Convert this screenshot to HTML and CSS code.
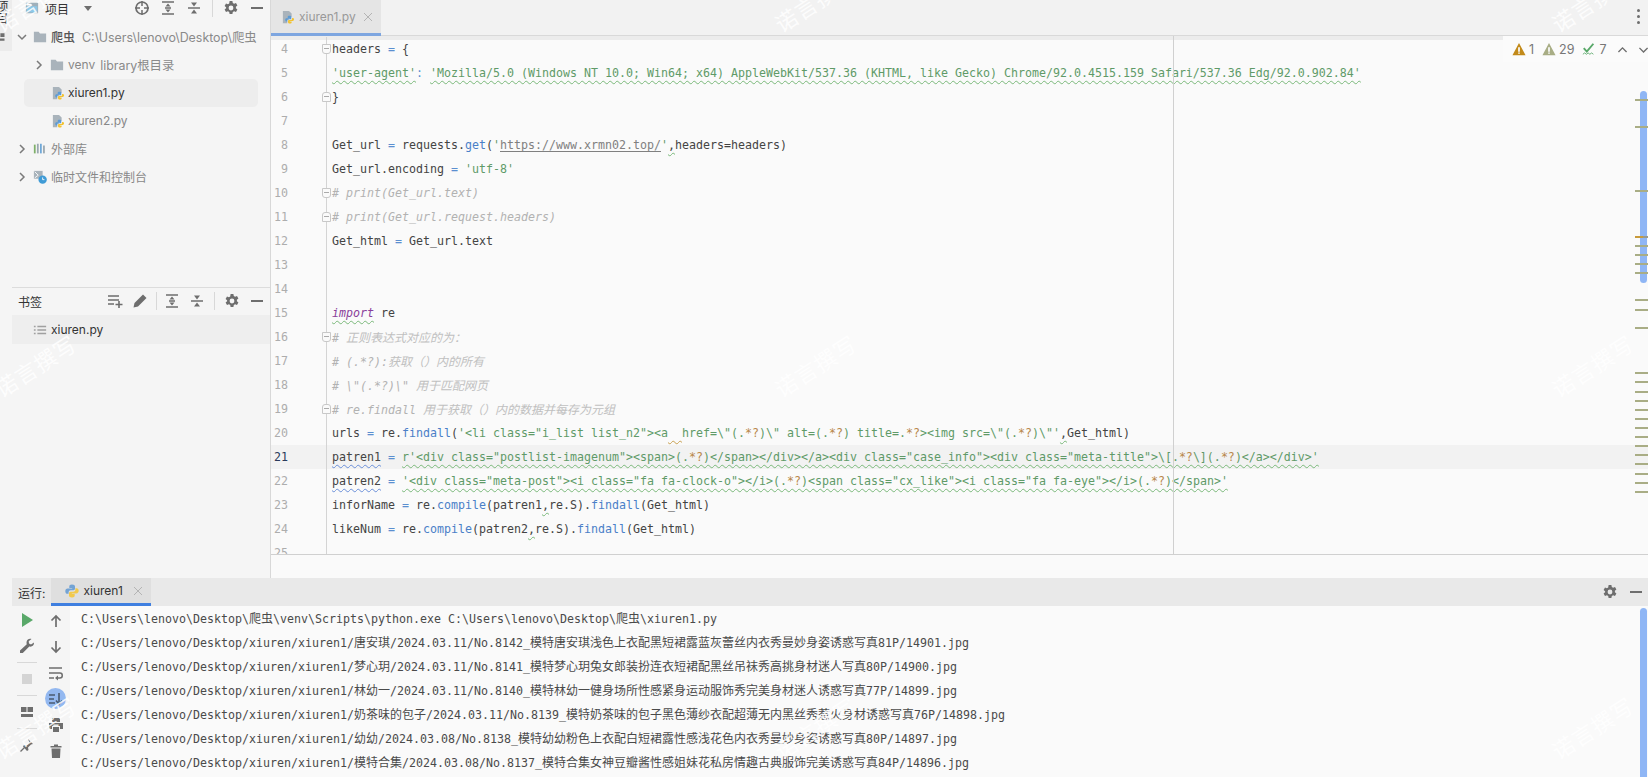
FILE: index.html
```html
<!DOCTYPE html>
<html lang="zh">
<head>
<meta charset="utf-8">
<title>xiuren1.py</title>
<link rel="stylesheet" href="styles.css">
</head>
<body>
<svg class="defs" width="0" height="0">
  <symbol id="i-gear" viewBox="0 0 16 16"><path fill="#6e6e6e" fill-rule="evenodd" d="M6.6 1h2.8l.4 2 1.3.7 1.9-.7 1.4 2.4-1.5 1.3v1.6l1.5 1.3-1.4 2.4-1.9-.7-1.3.7-.4 2H6.6l-.4-2-1.3-.7-1.9.7-1.4-2.4 1.5-1.3V7.2L1.600 5.900 3 3.500l1.900.7 1.300-.7zM8 5.600a2.400 2.400 0 1 0 0 4.800 2.400 2.400 0 0 0 0-4.800z"/></symbol>
  <symbol id="i-minus" viewBox="0 0 16 16"><rect x="2" y="7" width="12" height="2" fill="#6e6e6e"/></symbol>
  <symbol id="i-target" viewBox="0 0 16 16"><circle cx="8" cy="8" r="6" fill="none" stroke="#6e6e6e" stroke-width="1.700"/><path d="M8 1v5M8 10v5M1 8h5M10 8h5" stroke="#6e6e6e" stroke-width="1.500"/></symbol>
  <symbol id="i-expand" viewBox="0 0 16 16"><path d="M2 2h12M2 14h12M5 8h6" stroke="#6e6e6e" stroke-width="1.400"/><path d="M8 3.500 10.500 6.500h-5zM8 12.500 10.500 9.500h-5z" fill="#6e6e6e"/></symbol>
  <symbol id="i-collapse" viewBox="0 0 16 16"><path d="M2 8h12" stroke="#6e6e6e" stroke-width="1.500"/><path d="M8 6.500 5 2.500h6zM8 9.500 5 13.500h6z" fill="#6e6e6e"/></symbol>
  <symbol id="i-folder" viewBox="0 0 16 14"><path fill="#a9b3bb" d="M1 1h5.500l1.500 2h7v10H1z"/></symbol>
  <symbol id="i-chev-r" viewBox="0 0 10 10"><path d="M3 1l4 4-4 4" fill="none" stroke="#7a7a7a" stroke-width="1.500"/></symbol>
  <symbol id="i-chev-d" viewBox="0 0 10 10"><path d="M1 3l4 4 4-4" fill="none" stroke="#7a7a7a" stroke-width="1.500"/></symbol>
  <symbol id="i-py" viewBox="0 0 16 16">
    <path fill="#4f8fd0" d="M8 1.500C5.500 1.500 5.300 2.600 5.300 3.500V5h2.900v.6H3.600C2.200 5.600 1.300 6.700 1.300 8.200c0 1.600.9 2.600 2.200 2.600h1.100V9.200c0-1.200 1-2 2.100-2h2.700c1 0 1.600-.8 1.600-1.700v-2C11 2.300 9.900 1.500 8 1.500z" opacity=".75"/>
    <path fill="#f2c94a" d="M8 14.500c2.500 0 2.700-1.100 2.700-2V11H7.800v-.6h4.600c1.400 0 2.300-1.100 2.300-2.600 0-1.600-.9-2.600-2.200-2.600h-1.100v1.600c0 1.200-1 2-2.100 2H6.600C5.600 8.800 5 9.600 5 10.500v2c0 1.200 1.100 2 3 2z"/>
  </symbol>
  <symbol id="i-pyfile" viewBox="0 0 16 16">
    <path fill="#a9b3bb" d="M1 1h7l3 3v4H8v3H6v4H1z"/>
    <path fill="#5b9bd5" d="M8.500 6.500C6.800 6.500 6.500 7.300 6.500 8v1h2.200v.5H5.200C4.200 9.500 3.700 10.300 3.700 11.300s.6 1.700 1.500 1.700H6v-1c0-.9.7-1.400 1.500-1.400h2c.7 0 1.100-.6 1.100-1.200V8c0-.9-.7-1.500-2.100-1.500z"/>
    <path fill="#f2c230" d="M9 15.500c1.700 0 2-.8 2-1.500v-1H8.800v-.5h3.500c1 0 1.500-.8 1.500-1.800s-.6-1.700-1.500-1.700h-.8v1c0 .9-.7 1.400-1.500 1.400H8c-.7 0-1.100.6-1.100 1.200V14c0 .9.700 1.500 2.100 1.500z"/>
  </symbol>
  <symbol id="i-project" viewBox="0 0 16 16"><path fill="#9fb0bb" d="M1 2h14v12H1z"/><path fill="#fff" d="M2 3h5l1 2H2z"/><path fill="#8cc8e8" d="M2 6h12v7H2z"/></symbol>
  <symbol id="i-libs" viewBox="0 0 16 16"><rect x="1" y="3" width="2" height="10" fill="#7fb069"/><rect x="4.500" y="2" width="2" height="11" fill="#9aa7b0"/><rect x="8" y="2" width="2" height="11" fill="#6fa8d8"/><rect x="11.500" y="4" width="2" height="9" fill="#9aa7b0"/></symbol>
  <symbol id="i-scratch" viewBox="0 0 16 16"><path fill="#a9b3bb" d="M1 1h10v9H1z"/><path d="M2 2l4 4-4 3" stroke="#fff" fill="none"/><circle cx="11" cy="11" r="4.800" fill="#3f9bd6"/><path d="M11 8.500V11h2" stroke="#fff" fill="none"/></symbol>
  <symbol id="i-list" viewBox="0 0 16 16"><path d="M5 4h10M5 8h10M5 12h10" stroke="#a0a0a0" stroke-width="1.500"/><path d="M1 4h2M1 8h2M1 12h2" stroke="#a0a0a0" stroke-width="1.500"/></symbol>
  <symbol id="i-addlist" viewBox="0 0 16 16"><path d="M1 3h11M1 7h11M1 11h6" stroke="#6e6e6e" stroke-width="1.600"/><path d="M12 8v7M8.500 11.500h7" stroke="#6e6e6e" stroke-width="1.600"/></symbol>
  <symbol id="i-pencil" viewBox="0 0 16 16"><path fill="#6e6e6e" d="M11 1.500l3.500 3.500-8.500 8.500-4.500 1 1-4.500z"/></symbol>
  <symbol id="i-play" viewBox="0 0 16 16"><path fill="#59a869" d="M3 1l11 7-11 7z"/></symbol>
  <symbol id="i-wrench" viewBox="0 0 16 16"><path fill="#6e6e6e" d="M15 4.500 12 6.500l-2-1-.3-2.300L12.500 1C10 .2 7.500 1.800 7.500 4.500c0 .7.100 1.200.3 1.700L1 12.500V15h2.800l6.500-6.500c2.500.7 5-1 4.700-4z"/></symbol>
  <symbol id="i-stop" viewBox="0 0 16 16"><rect x="3" y="3" width="10" height="10" fill="#d4d4d4"/></symbol>
  <symbol id="i-layout" viewBox="0 0 16 16"><path fill="#6e6e6e" d="M2 3h5.500v5H2zM8.500 3H14v5H8.500zM2 10h12v3H2z"/></symbol>
  <symbol id="i-pin" viewBox="0 0 16 16"><path fill="#6e6e6e" d="M9 2l5 5-2 .5-3 3 .5 2.500-1.500 1L4 9.500l1-1.500 2.500.5 3-3z"/><path d="M5.500 10.500 1.500 14.500" stroke="#6e6e6e" stroke-width="1.200"/></symbol>
  <symbol id="i-up" viewBox="0 0 16 16"><path d="M8 14V3M3.500 7.500 8 3l4.500 4.500" fill="none" stroke="#6e6e6e" stroke-width="1.700"/></symbol>
  <symbol id="i-down" viewBox="0 0 16 16"><path d="M8 2v11M3.500 8.500 8 13l4.500-4.500" fill="none" stroke="#6e6e6e" stroke-width="1.700"/></symbol>
  <symbol id="i-nup" viewBox="0 0 16 16"><path d="M3 11l5-5 5 5" fill="none" stroke="#6e6e6e" stroke-width="1.700"/></symbol>
  <symbol id="i-ndown" viewBox="0 0 16 16"><path d="M3 6l5 5 5-5" fill="none" stroke="#6e6e6e" stroke-width="1.700"/></symbol>
  <symbol id="i-wrap" viewBox="0 0 16 16"><path d="M1 3h13M1 13h5M1 8h11c3 0 3 5 0 5H9" fill="none" stroke="#6e6e6e" stroke-width="1.500"/><path d="M10 10.500v5l-3-2.500z" fill="#6e6e6e"/></symbol>
  <symbol id="i-scroll" viewBox="0 0 16 16"><path d="M1 4h6M1 8h5M1 12h6M11 2v11M8 9.500l3 3.500 3-3.500" fill="none" stroke="#4a5a70" stroke-width="1.600"/></symbol>
  <symbol id="i-print" viewBox="0 0 16 16"><path fill="#6e6e6e" d="M4 1h8v4H4zM1 6h14v6h-3V9H4v3H1zM5 10h6v5H5z"/></symbol>
  <symbol id="i-trash" viewBox="0 0 16 16"><path fill="#6e6e6e" d="M2.500 3H6V1.500h4V3h3.500v1.500h-11zM3.500 5.500h9L12 15H4z"/></symbol>
  <symbol id="i-warn" viewBox="0 0 16 16"><path fill-rule="evenodd" d="M8 1l7.500 14H.5zM7 6v5h2V6zM7 12v1.500h2V12z"/></symbol>
  <symbol id="i-typo" viewBox="0 0 16 16"><path d="M2 7l3.500 4L13 2" fill="none" stroke="#59a869" stroke-width="2.200"/><path d="M1 14l2-1.500 2 1.500 2-1.500 2 1.500 2-1.500 2 1.500" fill="none" stroke="#59a869"/></symbol>
  <symbol id="i-close" viewBox="0 0 10 10"><path d="M1 1l8 8M9 1l-8 8" stroke="#b4b4b4" stroke-width="1"/></symbol>
</svg>

<div class="app">
  <div class="top">
    <aside class="sidebar">
      <div class="strip"><span class="strip-text">项目</span><svg class="strip-folder"><use href="#i-layout"/></svg></div>
      <div class="panels">
        <section class="project">
          <header class="phead">
            <svg class="ico14"><use href="#i-project"/></svg>
            <span class="ptitle">项目</span>
            <span class="caret"></span>
            <div class="tools">
              <svg class="tool"><use href="#i-target"/></svg>
              <svg class="tool"><use href="#i-expand"/></svg>
              <svg class="tool"><use href="#i-collapse"/></svg>
              <i class="tsep"></i>
              <svg class="tool"><use href="#i-gear"/></svg>
              <svg class="tool"><use href="#i-minus"/></svg>
            </div>
          </header>
          <div class="row lvl0"><svg class="chev"><use href="#i-chev-d"/></svg><svg class="ico14"><use href="#i-folder"/></svg><b class="name dir">爬虫</b><span class="path">C:\Users\lenovo\Desktop\爬虫</span></div>
          <div class="row lvl1"><svg class="chev"><use href="#i-chev-r"/></svg><svg class="ico14"><use href="#i-folder"/></svg><span class="name gray">venv</span><span class="path lib">library根目录</span></div>
          <div class="row lvl2 sel"><svg class="ico14"><use href="#i-pyfile"/></svg><span class="name">xiuren1.py</span></div>
          <div class="row lvl2"><svg class="ico14"><use href="#i-pyfile"/></svg><span class="name gray">xiuren2.py</span></div>
          <div class="row lvl0"><svg class="chev"><use href="#i-chev-r"/></svg><svg class="ico14"><use href="#i-libs"/></svg><span class="name gray">外部库</span></div>
          <div class="row lvl0"><svg class="chev"><use href="#i-chev-r"/></svg><svg class="ico14"><use href="#i-scratch"/></svg><span class="name gray">临时文件和控制台</span></div>
        </section>
        <section class="bookmarks">
          <header class="bhead">
            <span class="ptitle">书签</span>
            <div class="tools">
              <svg class="tool"><use href="#i-addlist"/></svg>
              <svg class="tool"><use href="#i-pencil"/></svg>
              <i class="tsep"></i>
              <svg class="tool"><use href="#i-expand"/></svg>
              <svg class="tool"><use href="#i-collapse"/></svg>
              <i class="tsep"></i>
              <svg class="tool"><use href="#i-gear"/></svg>
              <svg class="tool"><use href="#i-minus"/></svg>
            </div>
          </header>
          <div class="brow"><svg class="ico14"><use href="#i-list"/></svg><span class="name">xiuren.py</span></div>
        </section>
      </div>
    </aside>

    <main class="editor">
      <div class="tabs">
        <div class="tab"><svg class="ico14"><use href="#i-pyfile"/></svg><span class="tabname">xiuren1.py</span><svg class="x"><use href="#i-close"/></svg></div>
        <div class="dots"><i></i><i></i><i></i></div>
      </div>
      <div class="band"></div>
      <div class="code">
<div class="ln"><span class="no">4</span><span class="src"><u class="fold"></u>headers <e>=</e> {</span></div>
<div class="ln"><span class="no">5</span><span class="src"><s class="w">'user-agent'</s><e>:</e> <s class="w">'Mozilla/5.0 (Windows NT 10.0; Win64; x64) AppleWebKit/537.36 (KHTML, like Gecko) Chrome/92.0.4515.159 Safari/537.36 Edg/92.0.902.84'</s></span></div>
<div class="ln"><span class="no">6</span><span class="src"><u class="fold end"></u>}</span></div>
<div class="ln"><span class="no">7</span><span class="src"></span></div>
<div class="ln"><span class="no">8</span><span class="src">Get_url <e>=</e> requests.<m>get</m>(<s>'</s><a>https://www.xrmn02.top/</a><s>'</s><v>,</v>headers=headers)</span></div>
<div class="ln"><span class="no">9</span><span class="src">Get_url.encoding <e>=</e> <s>'utf-8'</s></span></div>
<div class="ln"><span class="no">10</span><span class="src"><u class="fold"></u><c># print(Get_url.text)</c></span></div>
<div class="ln"><span class="no">11</span><span class="src"><u class="fold end"></u><c># print(Get_url.request.headers)</c></span></div>
<div class="ln"><span class="no">12</span><span class="src">Get_html <e>=</e> Get_url.text</span></div>
<div class="ln"><span class="no">13</span><span class="src"></span></div>
<div class="ln"><span class="no">14</span><span class="src"></span></div>
<div class="ln"><span class="no">15</span><span class="src"><k>import</k> re</span></div>
<div class="ln"><span class="no">16</span><span class="src"><u class="fold"></u><c># <z>正则表达式对应的为：</z></c></span></div>
<div class="ln"><span class="no">17</span><span class="src"><c># (.*?):<z>获取（）内的所有</z></c></span></div>
<div class="ln"><span class="no">18</span><span class="src"><c># \"(.*?)\" <z>用于匹配网页</z></c></span></div>
<div class="ln"><span class="no">19</span><span class="src"><u class="fold end"></u><c># re.findall <z>用于获取（）内的数据并每存为元组</z></c></span></div>
<div class="ln"><span class="no">20</span><span class="src">urls <e>=</e> re.<m>findall</m>(<s>'&lt;li class="i_list list_n2"&gt;&lt;a<y>  </y>href=\"(.<o>*?</o>)\" alt=(.<o>*?</o>) title=.<o>*?</o>&gt;&lt;img src=\"(.<o>*?</o>)\"'</s><v>,</v>Get_html)</span></div>
<div class="ln cur"><span class="no">21</span><span class="src"><n>patren1</n> <e>=</e> <s class="w">r'&lt;div class="postlist-imagenum"&gt;&lt;span&gt;(.<o>*?</o>)&lt;/span&gt;&lt;/div&gt;&lt;/a&gt;&lt;div class="case_info"&gt;&lt;div class="meta-title"&gt;\[.<o>*?</o>\](.<o>*?</o>)&lt;/a&gt;&lt;/div&gt;'</s></span></div>
<div class="ln"><span class="no">22</span><span class="src"><n>patren2</n> <e>=</e> <s class="w">'&lt;div class="meta-post"&gt;&lt;i class="fa fa-clock-o"&gt;&lt;/i&gt;(.<o>*?</o>)&lt;span class="cx_like"&gt;&lt;i class="fa fa-eye"&gt;&lt;/i&gt;(.<o>*?</o>)&lt;/span&gt;'</s></span></div>
<div class="ln"><span class="no">23</span><span class="src">inforName <e>=</e> re.<m>compile</m>(patren1<v>,</v>re.S).<m>findall</m>(Get_html)</span></div>
<div class="ln"><span class="no">24</span><span class="src">likeNum <e>=</e> re.<m>compile</m>(patren2<v>,</v>re.S).<m>findall</m>(Get_html)</span></div>
<div class="ln"><span class="no">25</span><span class="src"></span></div>
        <i class="margin"></i>
        <div class="widget">
          <svg class="warn w1"><use href="#i-warn"/></svg><span>1</span>
          <svg class="warn w2"><use href="#i-warn"/></svg><span>29</span>
          <svg class="warn"><use href="#i-typo"/></svg><span>7</span>
          <svg class="nav"><use href="#i-nup"/></svg>
          <svg class="nav"><use href="#i-ndown"/></svg>
        </div>
        <div class="stripe">
          <i class="thumb"></i>
          <i style="top:63px"></i><i style="top:90px"></i><i style="top:154px"></i>
          <i class="amber" style="top:200px"></i><i style="top:209px"></i><i style="top:218px"></i><i style="top:227px"></i><i style="top:236px"></i>
          <i style="top:263px"></i><i style="top:273px"></i><i style="top:291px"></i><i style="top:336px"></i><i style="top:345px"></i><i style="top:355px"></i><i style="top:364px"></i><i style="top:373px"></i><i style="top:382px"></i><i style="top:391px"></i><i style="top:400px"></i><i style="top:409px"></i><i style="top:418px"></i><i style="top:427px"></i><i style="top:437px"></i><i style="top:446px"></i><i style="top:455px"></i>
        </div>
      </div>
      <div class="gap"></div>
    </main>
  </div>

  <section class="run">
    <div class="strip2"></div>
    <div class="runpanel">
      <header class="rhead">
        <span class="ptitle">运行:</span>
        <div class="rtab"><svg class="ico16"><use href="#i-py"/></svg><span class="rname">xiuren1</span><svg class="x"><use href="#i-close"/></svg></div>
        <div class="tools rtools">
          <svg class="tool"><use href="#i-gear"/></svg>
          <svg class="tool"><use href="#i-minus"/></svg>
        </div>
      </header>
      <div class="rbody">
        <div class="col c1">
          <svg class="rt"><use href="#i-play"/></svg>
          <svg class="rt"><use href="#i-wrench"/></svg>
          <i class="hsep"></i>
          <svg class="rt"><use href="#i-stop"/></svg>
          <i class="hsep"></i>
          <svg class="rt"><use href="#i-layout"/></svg>
          <i class="hsep"></i>
          <svg class="rt"><use href="#i-pin"/></svg>
        </div>
        <div class="col c2">
          <svg class="rt"><use href="#i-up"/></svg>
          <svg class="rt"><use href="#i-down"/></svg>
          <svg class="rt"><use href="#i-wrap"/></svg>
          <span class="on"><svg class="rt"><use href="#i-scroll"/></svg></span>
          <svg class="rt"><use href="#i-print"/></svg>
          <svg class="rt"><use href="#i-trash"/></svg>
        </div>
        <div class="console">
<div>C:\Users\lenovo\Desktop\<z>爬虫</z>\venv\Scripts\python.exe C:\Users\lenovo\Desktop\<z>爬虫</z>\xiuren1.py</div>
<div>C:/Users/lenovo/Desktop/xiuren/xiuren1/<z>唐安琪</z>/2024.03.11/No.8142_<z>模特唐安琪浅色上衣配黑短裙露蓝灰蕾丝内衣秀曼妙身姿诱惑写真</z>81P/14901.jpg</div>
<div>C:/Users/lenovo/Desktop/xiuren/xiuren1/<z>梦心玥</z>/2024.03.11/No.8141_<z>模特梦心玥兔女郎装扮连衣短裙配黑丝吊袜秀高挑身材迷人写真</z>80P/14900.jpg</div>
<div>C:/Users/lenovo/Desktop/xiuren/xiuren1/<z>林幼一</z>/2024.03.11/No.8140_<z>模特林幼一健身场所性感紧身运动服饰秀完美身材迷人诱惑写真</z>77P/14899.jpg</div>
<div>C:/Users/lenovo/Desktop/xiuren/xiuren1/<z>奶茶味的包子</z>/2024.03.11/No.8139_<z>模特奶茶味的包子黑色薄纱衣配超薄无内黑丝秀惹火身材诱惑写真</z>76P/14898.jpg</div>
<div>C:/Users/lenovo/Desktop/xiuren/xiuren1/<z>幼幼</z>/2024.03.08/No.8138_<z>模特幼幼粉色上衣配白短裙露性感浅花色内衣秀曼妙身姿诱惑写真</z>80P/14897.jpg</div>
<div>C:/Users/lenovo/Desktop/xiuren/xiuren1/<z>模特合集</z>/2024.03.08/No.8137_<z>模特合集女神豆瓣酱性感姐妹花私房情趣古典服饰完美诱惑写真</z>84P/14896.jpg</div>
          <i class="cthumb"></i>
        </div>
      </div>
    </div>
  </section>

  <div class="marks">
    <span>诺言撰写</span><span>诺言撰写</span><span>诺言撰写</span>
    <span>诺言撰写</span><span>诺言撰写</span><span>诺言撰写</span>
    <span>诺言撰写</span><span>诺言撰写</span><span>诺言撰写</span>
  </div>
</div>
</body>
</html>
```

FILE: styles.css
```css
* { box-sizing: border-box; }
html, body { margin: 0; padding: 0; }
body { font-family: Inter, "Noto Sans CJK SC", sans-serif; font-size: 12px; color: #333; background: #fafafa; overflow: hidden; }
.defs { position: absolute; }
svg { display: block; flex: none; }
i, e, s, m, c, k, n, o, v, y, u, a, z { font-style: normal; text-decoration: none; }

.app { position: relative; width: 1648px; height: 777px; overflow: hidden; display: flex; flex-direction: column; }
.top { height: 578px; display: flex; flex: none; }

/* sidebar */
.sidebar { width: 271px; flex: none; display: flex; background: #f5f5f5; border-right: 1px solid #d8d8d8; }
.strip { width: 12px; height: 51px; flex: none; background: #ececec; overflow: hidden; }
.strip-text { display: block; writing-mode: vertical-rl; font-size: 12px; line-height: 12px; margin: 0 0 0 -5px; height: 28px; color: #333; }
.strip-folder { width: 16px; height: 12px; margin: 3px 0 0 -8px; }
.panels { flex: 1; min-width: 0; display: flex; flex-direction: column; }
.project { height: 287px; flex: none; }
.phead { height: 23px; display: flex; align-items: center; padding: 0 0 7px 13px; }
.ico14 { width: 14px; height: 14px; }
.ico16 { width: 16px; height: 16px; }
.ptitle { font-size: 12px; color: #333; white-space: nowrap; }
.phead .ptitle { margin-left: 6px; }
.caret { width: 0; height: 0; margin-left: 15px; border-left: 4px solid transparent; border-right: 4px solid transparent; border-top: 5px solid #6e6e6e; }
.tools { margin-left: auto; display: flex; align-items: center; gap: 10px; padding-right: 5px; }
.tool { width: 16px; height: 16px; }
.tsep { width: 1px; height: 18px; background: #d8d8d8; }

.row { height: 28px; display: flex; align-items: center; white-space: nowrap; padding-bottom: 1px; }
.lvl0 { padding-left: 5px; }
.lvl1 { padding-left: 22px; }
.chev { width: 10px; height: 10px; margin-right: 6px; }
.name { font-size: 12px; color: #333; margin-left: 4px; }
.lvl2 { padding-left: 28px; margin: 0 12px; }
.lvl2 .name { margin-left: 2px; }
.lvl2.sel { background: #ededed; border-radius: 5px; }
.dir { font-weight: 500; color: #555; }
.gray { color: #888; }
.path { margin-left: 7px; font-size: 12.400px; color: #8a8a8a; }
.lib { margin-left: 5px; }

.bookmarks { flex: 1; border-top: 1px solid #dcdcdc; }
.bhead { height: 26px; display: flex; align-items: center; padding-left: 6px; }
.bhead .tools { gap: 9px; }
.bhead .tsep:first-of-type { margin: 0 -1.500px; }
.brow { height: 29px; display: flex; align-items: center; background: #eeeeee; padding-left: 21px; margin-top: 1px; }

/* editor */
.editor { flex: 1; min-width: 0; display: flex; flex-direction: column; background: #fafafa; }
.tabs { height: 36px; flex: none; background: #f2f2f2; display: flex; justify-content: space-between; border-bottom: 1px solid #d9d9d9; }
.tab { width: 110px; height: 36px; background: #e5e5e5; border-bottom: 3px solid #7ea6e0; display: flex; align-items: center; padding-left: 11px; }
.tabname { margin-left: 3px; font-size: 12px; color: #999; }
.x { width: 10px; height: 10px; margin-left: 7px; }
.dots { display: flex; flex-direction: column; gap: 3px; padding: 9px 8px 0 0; }
.dots i { width: 3px; height: 3px; border-radius: 50%; background: #6e6e6e; }
.band { height: 4px; flex: none; background: #ececec; }

.code { position: relative; height: 519px; flex: none; overflow: hidden; border-bottom: 1px solid #d0d0d0; margin-top: -4px; font-family: "DejaVu Sans Mono", "Noto Sans CJK SC", monospace; font-size: 11.630px; color: #444; padding-top: 1px; }
.gap { flex: 1; }
.ln { height: 24px; line-height: 24px; display: flex; white-space: pre; }
.no { width: 56px; flex: none; border-right: 1px solid #d4d4d4; color: #adadad; padding-right: 38px; text-align: right; }
.src { flex: 1; position: relative; padding-left: 5px; }
.cur { background: #f2f2f2; }
.cur .no { color: #2a3a5a; }
e { color: #5b8fd0; }
m { color: #4a80c8; }
s { color: #5f9a68; }
o { color: #b8864a; }
c { color: #b2b2b2; font-style: italic; }
k { color: #8a3f9a; font-style: italic; text-decoration: underline wavy #7ab87a 1px; text-underline-offset: 3px; }
a { color: #808080; text-decoration: underline; text-underline-offset: 2px; }
n { text-decoration: underline wavy #6a8fd8 1px; text-underline-offset: 3px; }
v { text-decoration: underline wavy #7ab87a 1px; text-underline-offset: 3px; }
y { text-decoration: underline wavy #c8a050 1px; text-underline-offset: 3px; }
s.w { text-decoration: underline wavy #7ab87a 1px; text-underline-offset: 3px; }
z { font-family: "Noto Sans CJK SC", sans-serif; font-size: 12px; }
c z { color: #c0c0c0; font-style: italic; }
.fold { position: absolute; left: -5px; top: 7px; width: 9px; height: 10px; background: #fafafa; border: 1px solid #c8c8c8; border-bottom-left-radius: 3px; border-bottom-right-radius: 3px; }
.fold::after { content: ""; position: absolute; left: 1px; top: 3px; width: 5px; height: 1px; background: #aaa; }
.fold.end { border-radius: 3px 3px 0 0; }
.margin { position: absolute; left: 902px; top: 0; bottom: 0; width: 1px; background: #d0d0d0; }

.widget { position: absolute; left: 1232px; top: 0; width: 145px; height: 26px; padding-left: 9px; background: #fbfbfb; display: flex; align-items: center; gap: 3px; font-family: Inter, sans-serif; font-size: 12.500px; color: #777; }
.warn { width: 14px; height: 14px; margin-left: 5px; }
.warn:first-child { margin-left: 0; }
.w1 { fill: #c28a1a; }
.w2 { fill: #a8ad85; }
.nav { width: 13px; height: 13px; }
.widget .nav:nth-last-child(2) { margin-left: 6px; }
.widget .nav:last-child { margin-left: 5px; }
.stripe { position: absolute; right: 0; top: 0; bottom: 0; width: 13px; }
.stripe i { position: absolute; left: 0; right: 0; height: 2px; background: #a9ad85; }
.stripe .amber { background: linear-gradient(90deg, #c89a3a 60%, #9a9a8a 60%); }
.stripe .thumb { left: 5px; right: 1px; top: 55px; height: 192px; border-radius: 4px; background: #8fb6f5; }

/* run */
.run { flex: 1; display: flex; background: #f5f5f5; min-height: 0; }
.strip2 { width: 12px; flex: none; }
.runpanel { flex: 1; min-width: 0; display: flex; flex-direction: column; }
.rhead { height: 28px; flex: none; display: flex; align-items: center; background: #e9e9e9; padding-left: 6px; }
.rtab { height: 28px; margin-left: 6px; width: 100px; display: flex; align-items: center; background: #dfdfdf; border-bottom: 3px solid #3f7fe0; padding-left: 13px; }
.rname { margin-left: 3px; font-size: 12px; color: #333; }
.rtab .x { margin-left: 10px; }
.rtools { gap: 10px; padding-right: 4px; }
.rbody { flex: 1; display: flex; min-height: 0; }
.col { width: 29px; flex: none; display: flex; flex-direction: column; align-items: center; }
.c1 { padding-top: 1px; }
.c2 { padding-top: 2px; }
.rt { width: 16px; height: 26px; flex: none; }
.hsep { width: 20px; height: 1px; flex: none; margin: 3px 0; background: #d8d8d8; }
.on { width: 21px; height: 21px; border-radius: 50%; background: #93b8f0; display: flex; align-items: center; justify-content: center; margin: 2px 0 3px; }
.on .rt { height: 16px; }
.console { position: relative; flex: 1; background: #fafafa; padding-left: 11px; font-family: "DejaVu Sans Mono", "Noto Sans CJK SC", monospace; font-size: 11.630px; line-height: 24px; color: #4a4a4a; }
.console div { height: 24px; white-space: pre; }
.cthumb { position: absolute; right: 1px; top: 2px; bottom: 0; width: 7px; border-radius: 4px 4px 0 0; background: #8fb6f5; }

/* watermark */
.marks { position: absolute; left: -40px; top: -22px; width: 1800px; height: 850px; display: grid; grid-template-columns: 780px 777px 150px; grid-template-rows: 365px 362px 60px; pointer-events: none; }
.marks span { width: 150px; height: 44px; line-height: 44px; text-align: center; font-size: 22px; letter-spacing: 1px; color: rgba(255, 255, 255, .85); transform: rotate(-33deg); font-family: "Noto Sans CJK SC", sans-serif; white-space: nowrap; }
```
